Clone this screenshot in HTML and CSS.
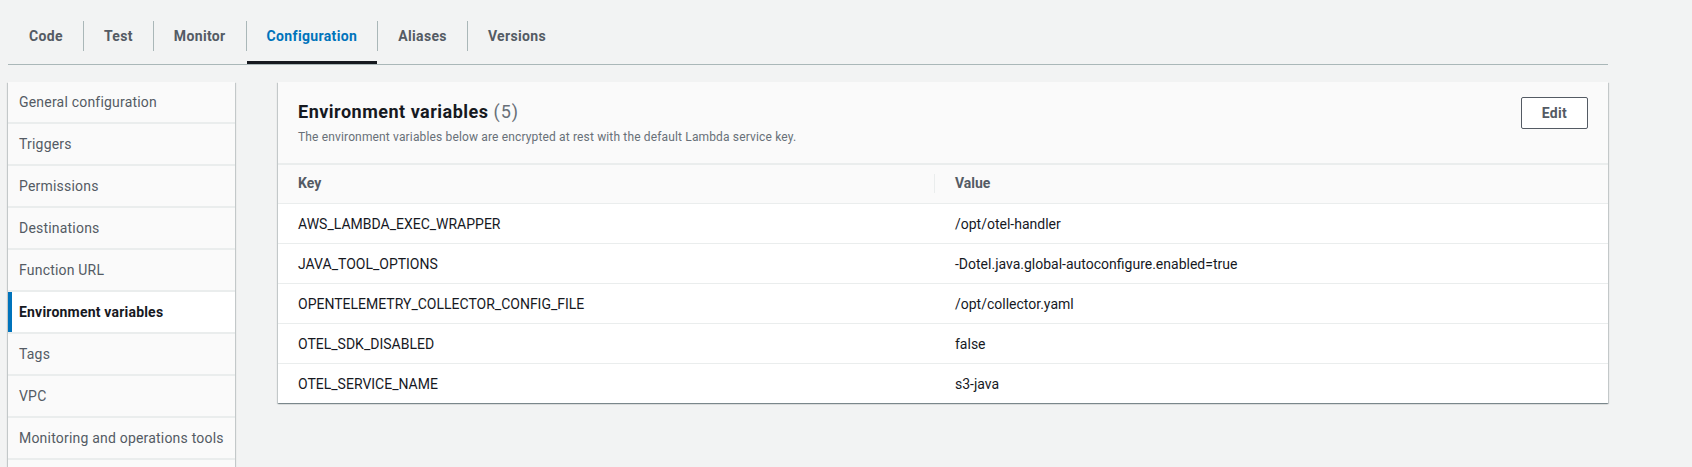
FILE: index.html
```html
<!DOCTYPE html>
<html lang="en">
<head>
<meta charset="utf-8">
<title>Configuration - Environment variables</title>
<link rel="stylesheet" href="styles.css">
</head>
<body>
<div class="page">
  <nav class="tabs">
    <a class="tab"><span class="tab-label first">Code</span></a>
    <a class="tab"><span class="tab-label">Test</span></a>
    <a class="tab"><span class="tab-label">Monitor</span></a>
    <a class="tab active"><span class="tab-label">Configuration</span></a>
    <a class="tab"><span class="tab-label">Aliases</span></a>
    <a class="tab"><span class="tab-label">Versions</span></a>
  </nav>
  <div class="content">
    <ul class="side-nav">
      <li class="side-item">General configuration</li>
      <li class="side-item">Triggers</li>
      <li class="side-item">Permissions</li>
      <li class="side-item">Destinations</li>
      <li class="side-item">Function URL</li>
      <li class="side-item active">Environment variables</li>
      <li class="side-item">Tags</li>
      <li class="side-item">VPC</li>
      <li class="side-item">Monitoring and operations tools</li>
      <li class="side-item"></li>
    </ul>
    <section class="panel">
      <header class="panel-header">
        <div class="panel-titles">
          <h2 class="panel-title">Environment variables <span class="count">(5)</span></h2>
          <p class="panel-desc">The environment variables below are encrypted at rest with the default Lambda service key.</p>
        </div>
        <button class="btn">Edit</button>
      </header>
      <table class="env-table">
        <colgroup><col class="col-key"><col class="col-value"></colgroup>
        <thead>
          <tr><th><span class="th-inner">Key</span></th><th><span class="th-inner divided">Value</span></th></tr>
        </thead>
        <tbody>
          <tr><td>AWS_LAMBDA_EXEC_WRAPPER</td><td>/opt/otel-handler</td></tr>
          <tr><td>JAVA_TOOL_OPTIONS</td><td>-Dotel.java.global-autoconfigure.enabled=true</td></tr>
          <tr><td>OPENTELEMETRY_COLLECTOR_CONFIG_FILE</td><td>/opt/collector.yaml</td></tr>
          <tr><td>OTEL_SDK_DISABLED</td><td>false</td></tr>
          <tr><td>OTEL_SERVICE_NAME</td><td>s3-java</td></tr>
        </tbody>
      </table>
    </section>
  </div>
</div>
</body>
</html>
```
FILE: styles.css
```css
html, body {
  margin: 0;
  padding: 0;
  overflow: hidden;
  height: 100%;
}
body {
  background: #f2f3f3;
  font-family: Roboto, "Helvetica Neue", "Liberation Sans", Arial, sans-serif;
  font-size: 14px;
  color: #16191f;
}
.page {
  width: 1600px;
  margin-left: 8px;
  padding-top: 13px;
}
.tabs {
  display: flex;
  border-bottom: 1px solid #aab7b8;
}
.tab {
  position: relative;
  padding: 8px 0 13px;
  font-weight: 700;
  color: #545b64;
  letter-spacing: 0.35px;
  cursor: pointer;
}
.tab-label {
  display: block;
  padding: 4px 20px;
  line-height: 22px;
  border-left: 1px solid #aab7b8;
}
.tab-label.first {
  border-left: 0;
  padding-left: 21px;
}
.tab.active {
  color: #0073bb;
}
.tab.active::after {
  content: "";
  position: absolute;
  left: 1px;
  right: 0;
  bottom: 0;
  height: 3px;
  background: #16191f;
}
.content {
  display: flex;
  align-items: flex-start;
  gap: 43px;
  margin-top: 17px;
}
.side-nav {
  list-style: none;
  margin: 0;
  padding: 0;
  width: 227px;
  flex: none;
  display: flex;
  flex-direction: column;
  gap: 2px;
  background: #eaeded;
  box-shadow: 0 1px 1px 0 rgba(0,28,36,.3), 1px 1px 1px 0 rgba(0,28,36,.15), -1px 1px 1px 0 rgba(0,28,36,.15);
}
.side-item {
  height: 40px;
  line-height: 40px;
  padding-left: 11px;
  background: #fafafa;
  color: #545b64;
  letter-spacing: 0.2px;
  white-space: nowrap;
}
.side-item.active {
  background: #fff;
  color: #16191f;
  font-weight: 700;
  box-shadow: inset 4px 0 0 #0073bb;
}
.panel {
  flex: 1;
  background: #fff;
  box-shadow: 0 1px 1px 0 rgba(0,28,36,.3), 1px 1px 1px 0 rgba(0,28,36,.15), -1px 1px 1px 0 rgba(0,28,36,.15);
}
.panel-header {
  display: flex;
  justify-content: space-between;
  align-items: flex-start;
  padding: 19px 20px 18px;
  background: #fafafa;
  border-bottom: 2px solid #eaeded;
}
.panel-title {
  margin: 0;
  font-size: 18px;
  line-height: 22px;
  font-weight: 700;
  letter-spacing: 0.5px;
  color: #16191f;
}
.count {
  font-weight: 400;
  color: #687078;
  letter-spacing: 1px;
}
.panel-desc {
  margin: 6px 0 0;
  font-size: 12px;
  line-height: 16px;
  letter-spacing: 0.15px;
  color: #687078;
}
.btn {
  margin-top: -4px;
  height: 32px;
  padding: 0 20px;
  border: 1px solid #545b64;
  border-radius: 2px;
  background: #fff;
  color: #545b64;
  font-family: inherit;
  font-size: 14px;
  font-weight: 700;
  letter-spacing: 0.3px;
  line-height: 30px;
}
.env-table {
  width: 100%;
  border-collapse: collapse;
  table-layout: fixed;
}
.col-key { width: 656px; }
.env-table th {
  padding: 9px 0 10px;
  background: #fafafa;
  text-align: left;
  font-weight: 700;
  color: #545b64;
  border-bottom: 1px solid #eaeded;
}
.th-inner {
  display: block;
  line-height: 19px;
  padding-left: 20px;
}
.th-inner.divided {
  border-left: 1px solid #eaeded;
}
.env-table td {
  height: 39px;
  padding: 0 0 0 20px;
  color: #16191f;
  border-bottom: 1px solid #eaeded;
  white-space: nowrap;
}
.env-table td + td {
  padding-left: 21px;
}
.env-table tbody tr:last-child td {
  border-bottom: 0;
}
```
